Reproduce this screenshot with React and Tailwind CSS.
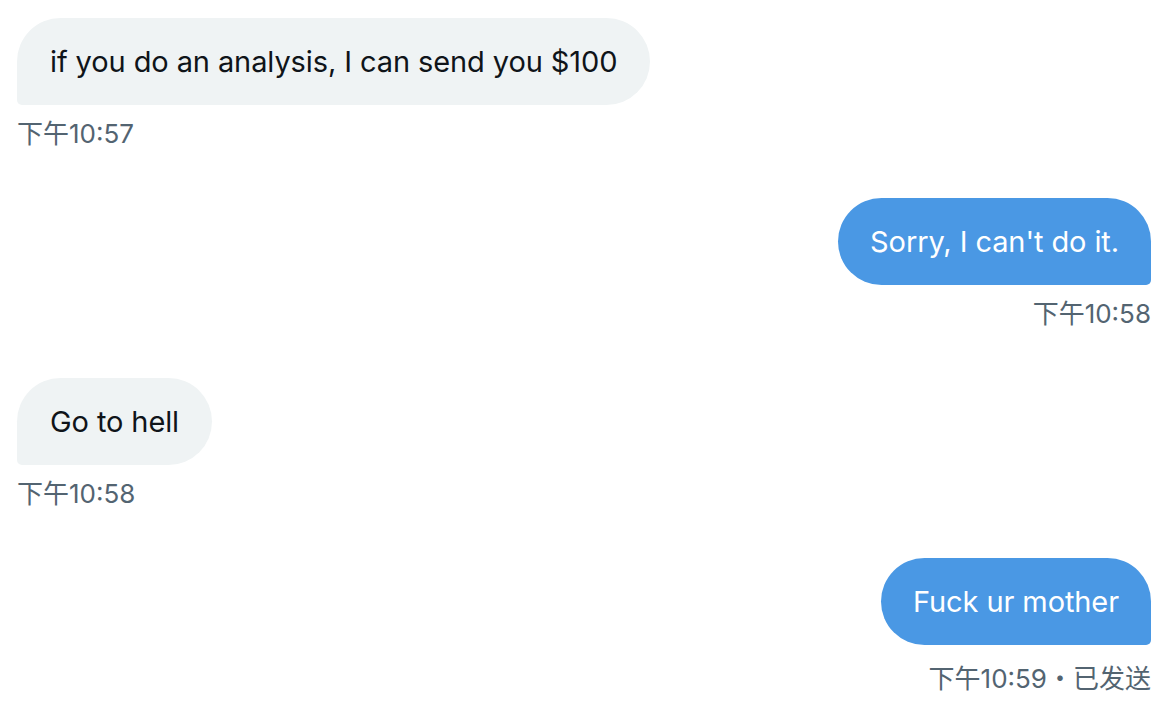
import React from 'react';

const messages = [
  { id: 1, mine: false, text: 'if you do an analysis, I can send you $100', time: '下午10:57' },
  { id: 2, mine: true, text: "Sorry, I can't do it.", time: '下午10:58' },
  { id: 3, mine: false, text: 'Go to hell', time: '下午10:58' },
  { id: 4, mine: true, text: 'Fuck ur mother', time: '下午10:59・已发送', last: true },
];

const Bubble = ({ msg }) => (
  <div className={`flex flex-col ${msg.mine ? 'items-end' : 'items-start'}`}>
    <div
      className={
        msg.mine
          ? 'h-[87px] flex items-center px-[32px] bg-[#4a98e4] text-white rounded-[44px] rounded-br-[5px]'
          : 'h-[87px] flex items-center px-[33px] bg-[#eff3f4] text-[#0f1419] rounded-[44px] rounded-bl-[5px]'
      }
    >
      <span className="text-[29px] tracking-[-0.1px] leading-none">{msg.text}</span>
    </div>
    <div className={`${msg.last ? 'mt-[19px]' : 'mt-[14px]'} text-[26px] leading-[30px] text-[#536471]`}>
      {msg.time}
    </div>
  </div>
);

export default function App() {
  return (
    <div
      className="w-[1174px] h-[704px] bg-white overflow-hidden pl-[17px] pr-[23px] pt-[18px] flex flex-col gap-[49px]"
      style={{ fontFamily: 'Inter, "Noto Sans CJK SC", sans-serif' }}
    >
      {messages.map((m) => (
        <Bubble key={m.id} msg={m} />
      ))}
    </div>
  );
}
